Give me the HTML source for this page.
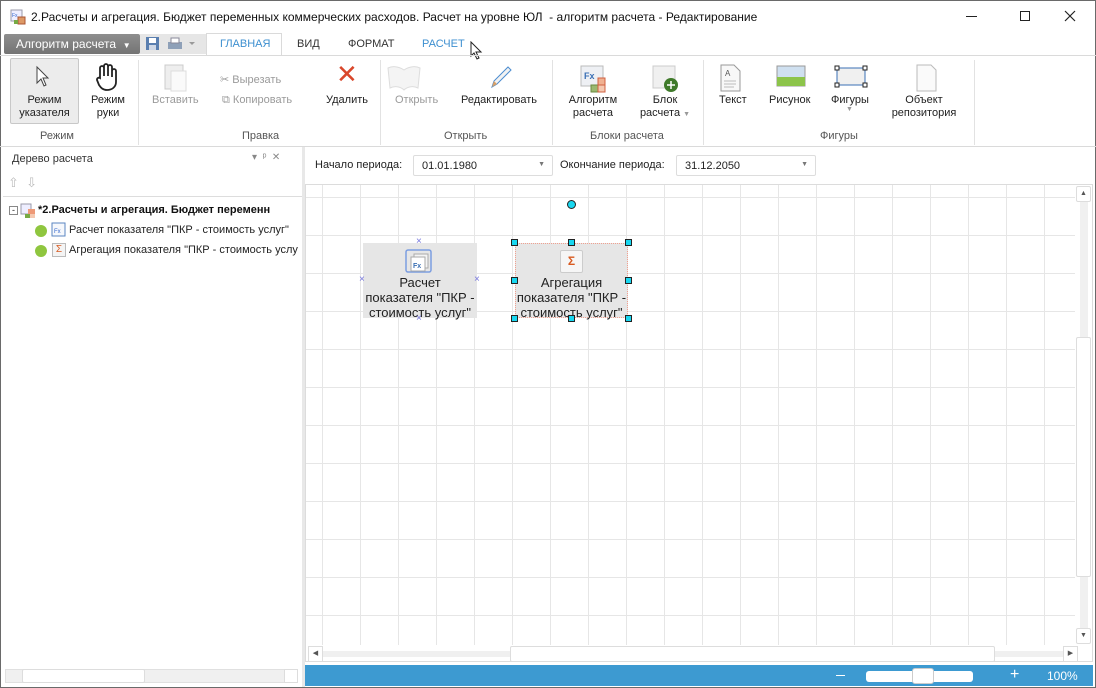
<!DOCTYPE html>
<html><head><meta charset="utf-8"><style>
*{margin:0;padding:0;box-sizing:border-box}
body{width:1096px;height:688px;overflow:hidden;background:#fff;font-family:"Liberation Sans","DejaVu Sans",sans-serif;font-size:11px;color:#222;position:relative}
.a{position:absolute;white-space:nowrap}
.g{color:#9a9a9a}
.c{text-align:center;line-height:13px}
.sep{position:absolute;width:1px;background:#e2e2e2}
.hd{position:absolute;width:7px;height:7px;background:#19d7f0;border:1px solid #222}
.x{position:absolute;color:#7777dd;font-size:10px}
</style></head><body>
<div class="a" style="left:0;top:0;width:1096px;height:688px;border:1px solid #6a6a6a"></div>
<!-- title -->
<svg class="a" style="left:10px;top:9px" width="16" height="16"><rect x="1" y="1" width="11" height="11" fill="#eef" stroke="#99a"/><text x="2" y="8" font-size="5" fill="#36c">Fx</text><rect x="8" y="8" width="7" height="7" fill="#d96" stroke="#a53"/><rect x="4" y="11" width="4" height="4" fill="#7a4"/></svg>
<div class="a" style="left:31px;top:10px;font-size:12px;color:#111">2.Расчеты и агрегация. Бюджет переменных коммерческих расходов. Расчет на уровне ЮЛ&nbsp; - алгоритм расчета - Редактирование</div>
<div class="a" style="left:966px;top:16px;width:11px;height:1px;background:#222"></div>
<div class="a" style="left:1020px;top:11px;width:10px;height:10px;border:1px solid #222"></div>
<svg class="a" style="left:1064px;top:10px" width="12" height="12"><path d="M1 1L11 11M11 1L1 11" stroke="#222" stroke-width="1.2"/></svg>
<!-- tabs row -->
<div class="a" style="left:4px;top:34px;width:136px;height:20px;background:linear-gradient(#8e8e8e,#747474);border-radius:2px;color:#fff;font-size:12px;padding:3px 0 0 12px">Алгоритм расчета &nbsp;<span style="font-size:8px">▼</span></div>
<div class="a" style="left:140px;top:34px;width:66px;height:20px;background:#e6e6e6"></div>
<svg class="a" style="left:145px;top:36px" width="60" height="16"><rect x="1" y="1" width="13" height="13" fill="#5a7fb0"/><rect x="4" y="2" width="7" height="5" fill="#fff"/><rect x="4" y="9" width="7" height="5" fill="#cfd8e6"/><rect x="23" y="6" width="14" height="7" fill="#8ea0b8"/><rect x="26" y="2" width="8" height="5" fill="#fff" stroke="#889"/><path d="M44 6 l6 0 l-3 3z" fill="#999"/></svg>
<div class="a" style="left:206px;top:33px;width:76px;height:23px;border:1px solid #dadada;border-bottom:none;background:#fff"></div>
<div class="a" style="left:220px;top:38px;color:#3d8fd0;font-size:11px">ГЛАВНАЯ</div>
<div class="a" style="left:297px;top:38px;color:#333">ВИД</div>
<div class="a" style="left:348px;top:38px;color:#333">ФОРМАТ</div>
<div class="a" style="left:422px;top:38px;color:#3d8fd0">РАСЧЕТ</div>
<svg class="a" style="left:470px;top:41px" width="14" height="20"><path d="M1 1 L1 15 L4 12 L7 18 L9 17 L6 11 L11 11Z" fill="#fff" stroke="#222"/></svg>
<div class="a" style="left:0;top:55px;width:1096px;height:1px;background:#dadada"></div>
<!-- ribbon -->
<div class="a" style="left:10px;top:58px;width:69px;height:66px;background:#ececec;border:1px solid #c8c8c8;border-radius:2px"></div>
<svg class="a" style="left:35px;top:65px" width="16" height="24"><path d="M2 2 L2 18 L6 14 L9 21 L11 20 L8 13 L13 13Z" fill="#fff" stroke="#444"/></svg>
<svg class="a" style="left:94px;top:62px" width="28" height="30"><path d="M6 16 V6 a2 2 0 0 1 4 0 V14 V4 a2 2 0 0 1 4 0 V14 V5 a2 2 0 0 1 4 0 V15 V9 a2 2 0 0 1 4 0 V20 c0 5-4 8-9 8 c-4 0-6-2-8-5 L3 18 a2 2 0 0 1 3-2z" fill="#fff" stroke="#222" stroke-width="1.8"/></svg>
<div class="a c" style="left:11px;top:94px;width:67px">Режим<br>указателя</div>
<div class="a c" style="left:82px;top:94px;width:52px">Режим<br>руки</div>
<div class="a c g" style="left:40px;top:130px;width:67px;color:#555;text-align:left">Режим</div>
<div class="sep" style="left:138px;top:60px;height:85px"></div>
<svg class="a" style="left:162px;top:61px" width="28" height="32"><rect x="3" y="4" width="18" height="24" fill="#eee" stroke="#ccc"/><rect x="9" y="10" width="15" height="20" fill="#fafafa" stroke="#ddd"/></svg>
<div class="a g" style="left:152px;top:94px">Вставить</div>
<div class="a g" style="left:220px;top:73px">✂ Вырезать</div>
<div class="a g" style="left:222px;top:94px">⧉ Копировать</div>
<div class="a" style="left:336px;top:59px;font-size:26px;color:#d9472b">✕</div>
<div class="a" style="left:326px;top:94px">Удалить</div>
<div class="a g" style="left:242px;top:130px;color:#555">Правка</div>
<div class="sep" style="left:380px;top:60px;height:85px"></div>
<svg class="a" style="left:384px;top:64px" width="40" height="28"><path d="M20 6 C14 2 8 2 4 4 L6 24 C10 22 16 22 20 26 C24 22 30 22 34 24 L36 4 C32 2 26 2 20 6Z" fill="#f4f4f4" stroke="#ddd"/></svg>
<div class="a g" style="left:395px;top:94px">Открыть</div>
<svg class="a" style="left:488px;top:63px" width="26" height="28"><path d="M4 24 L6 18 L20 4 L23 7 L9 21Z" fill="#f2f2f2" stroke="#4a8cd0"/><path d="M4 24 L6 18 L9 21Z" fill="#d9a066"/></svg>
<div class="a" style="left:461px;top:94px">Редактировать</div>
<div class="a" style="left:444px;top:130px;color:#555">Открыть</div>
<div class="sep" style="left:552px;top:60px;height:85px"></div>
<svg class="a" style="left:578px;top:64px" width="30" height="30"><rect x="3" y="2" width="22" height="20" fill="#eef0f4" stroke="#bbb"/><text x="6" y="15" font-size="9" font-weight="bold" fill="#3a6fb4" font-family="Liberation Sans">Fx</text><rect x="20" y="14" width="7" height="7" fill="#f0b090" stroke="#d06040"/><rect x="13" y="21" width="7" height="7" fill="#9ab870" stroke="#6a8a40"/><rect x="20" y="21" width="7" height="7" fill="#f4c8b0" stroke="#d06040"/></svg>
<div class="a c" style="left:562px;top:94px;width:62px">Алгоритм<br>расчета</div>
<svg class="a" style="left:650px;top:64px" width="30" height="30"><rect x="3" y="2" width="22" height="22" fill="#f0f0f0" stroke="#ccc"/><circle cx="21" cy="21" r="7" fill="#3f7a2a"/><path d="M21 17v8M17 21h8" stroke="#fff" stroke-width="1.5"/></svg>
<div class="a c" style="left:634px;top:94px;width:62px">Блок<br>расчета <span style="font-size:7px;color:#999">▼</span></div>
<div class="a" style="left:590px;top:130px;color:#555">Блоки расчета</div>
<div class="sep" style="left:703px;top:60px;height:85px"></div>
<svg class="a" style="left:718px;top:63px" width="26" height="30"><path d="M3 2 H16 L22 8 V28 H3Z" fill="#f8f8f8" stroke="#999"/><text x="7" y="13" font-size="8" fill="#555">A</text><path d="M6 18h12M6 21h12M6 24h10" stroke="#bbb"/></svg>
<div class="a" style="left:719px;top:94px">Текст</div>
<svg class="a" style="left:776px;top:65px" width="30" height="24"><rect x="1" y="1" width="28" height="20" fill="#cfe0f0" stroke="#999"/><rect x="1" y="12" width="28" height="9" fill="#8cc44a"/></svg>
<div class="a" style="left:769px;top:94px">Рисунок</div>
<svg class="a" style="left:834px;top:65px" width="34" height="24"><rect x="3" y="3" width="28" height="17" fill="#f0f0f0" stroke="#3a6fb4"/><rect x="1" y="1" width="4" height="4" fill="#fff" stroke="#222"/><rect x="29" y="1" width="4" height="4" fill="#fff" stroke="#222"/><rect x="1" y="18" width="4" height="4" fill="#fff" stroke="#222"/><rect x="29" y="18" width="4" height="4" fill="#fff" stroke="#222"/></svg>
<div class="a" style="left:831px;top:94px">Фигуры</div>
<div class="a" style="left:846px;top:106px;font-size:7px;color:#999">▼</div>
<svg class="a" style="left:914px;top:63px" width="26" height="30"><path d="M3 2 H17 L22 7 V28 H3Z" fill="#fafafa" stroke="#bbb"/></svg>
<div class="a c" style="left:884px;top:94px;width:80px">Объект<br>репозитория</div>
<div class="a" style="left:820px;top:130px;color:#555">Фигуры</div>
<div class="sep" style="left:974px;top:60px;height:85px"></div>
<div class="a" style="left:0;top:146px;width:1096px;height:1px;background:#dadada"></div>
<!-- left panel -->
<div class="a" style="left:12px;top:153px;color:#333">Дерево расчета</div>
<div class="a" style="left:252px;top:152px;color:#888;font-size:10px">▾ &nbsp;ᵖ &nbsp;✕</div>
<div class="a" style="left:8px;top:175px;color:#bbb;font-size:13px">⇧ &nbsp;⇩</div>
<div class="a" style="left:3px;top:196px;width:299px;height:1px;background:#ddd"></div>
<div class="a" style="left:302px;top:147px;width:3px;height:540px;background:#e8e8e8"></div>
<div class="a" style="left:9px;top:206px;width:9px;height:9px;border:1px solid #888;font-size:9px;line-height:6px;text-align:center">-</div>
<svg class="a" style="left:20px;top:203px" width="16" height="16"><rect x="1" y="1" width="10" height="10" fill="#eef" stroke="#99a"/><rect x="8" y="6" width="7" height="5" fill="#e97" /><rect x="5" y="11" width="5" height="4" fill="#7a4"/><rect x="10" y="11" width="5" height="4" fill="#f4c8b0"/></svg>
<div class="a" style="left:38px;top:204px;font-weight:bold;color:#111">*2.Расчеты и агрегация. Бюджет переменн</div>
<div class="a" style="left:35px;top:225px;width:12px;height:12px;border-radius:6px;background:#8fc63f"></div>
<svg class="a" style="left:51px;top:222px" width="16" height="16"><rect x="1" y="1" width="13" height="13" fill="#f6f8fc" stroke="#5b86c2"/><text x="3" y="11" font-size="6" fill="#36c">Fx</text></svg>
<div class="a" style="left:69px;top:224px;font-size:11px">Расчет показателя "ПКР - стоимость услуг"</div>
<div class="a" style="left:35px;top:245px;width:12px;height:12px;border-radius:6px;background:#8fc63f"></div>
<div class="a" style="left:52px;top:243px;width:14px;height:14px;border:1px solid #bbb;background:#f4f4f4;color:#d85a20;font-size:10px;text-align:center;line-height:12px">Σ</div>
<div class="a" style="left:69px;top:244px">Агрегация показателя "ПКР - стоимость услу</div>
<div class="a" style="left:5px;top:669px;width:293px;height:14px;background:#f0f0f0;border:1px solid #e0e0e0"></div>
<div class="a" style="left:22px;top:669px;width:123px;height:14px;background:#fff;border:1px solid #ddd;border-radius:2px"></div>
<div class="a" style="left:284px;top:669px;width:14px;height:14px;background:#fff;border:1px solid #ddd"></div>
<!-- period -->
<div class="a" style="left:315px;top:159px">Начало периода:</div>
<div class="a" style="left:413px;top:155px;width:140px;height:21px;border:1px solid #ddd;border-radius:2px;padding:4px 0 0 8px">01.01.1980<span style="position:absolute;right:7px;top:5px;font-size:7px;color:#777">▼</span></div>
<div class="a" style="left:560px;top:159px">Окончание периода:</div>
<div class="a" style="left:676px;top:155px;width:140px;height:21px;border:1px solid #ddd;border-radius:2px;padding:4px 0 0 8px">31.12.2050<span style="position:absolute;right:7px;top:5px;font-size:7px;color:#777">▼</span></div>
<!-- canvas -->
<div class="a" style="left:305px;top:184px;width:788px;height:478px;border:1px solid #dcdcdc"></div>
<div class="a" style="left:306px;top:185px;width:769px;height:460px;background-image:linear-gradient(90deg,#e6e6e6 1px,transparent 1px),linear-gradient(#e6e6e6 1px,transparent 1px);background-size:38px 38px;background-position:16px 12px"></div>
<div class="a" style="left:1080px;top:200px;width:8px;height:440px;background:#f0f0f0"></div>
<div class="a" style="left:1076px;top:186px;width:15px;height:16px;background:#fff;border:1px solid #ddd;border-radius:2px;font-size:7px;text-align:center;line-height:14px;color:#555">▲</div>
<div class="a" style="left:1076px;top:337px;width:15px;height:240px;background:#fff;border:1px solid #ddd;border-radius:2px"></div>
<div class="a" style="left:1076px;top:628px;width:15px;height:16px;background:#fff;border:1px solid #ddd;border-radius:2px;font-size:7px;text-align:center;line-height:14px;color:#555">▼</div>
<div class="a" style="left:308px;top:651px;width:770px;height:6px;background:#f0f0f0"></div>
<div class="a" style="left:308px;top:646px;width:15px;height:16px;background:#fff;border:1px solid #ddd;font-size:7px;line-height:14px;text-align:center;color:#555">◀</div>
<div class="a" style="left:510px;top:646px;width:485px;height:16px;background:#fff;border:1px solid #ddd;border-radius:2px"></div>
<div class="a" style="left:1063px;top:646px;width:15px;height:16px;background:#fff;border:1px solid #ddd;font-size:7px;line-height:14px;text-align:center;color:#555">▶</div>
<!-- status -->
<div class="a" style="left:305px;top:665px;width:788px;height:21px;background:#3d9ad1"></div>
<div class="a" style="left:836px;top:675px;width:9px;height:1px;background:#fff"></div>
<div class="a" style="left:866px;top:671px;width:107px;height:11px;background:#fff;border-radius:3px"></div>
<div class="a" style="left:912px;top:668px;width:22px;height:16px;background:#fff;border:1px solid #ccc;border-radius:3px"></div>
<div class="a" style="left:1010px;top:666px;color:#fff;font-size:16px">+</div>
<div class="a" style="left:1047px;top:669px;color:#fff;font-size:12px">100%</div>
<!-- node 1 -->
<div class="a" style="left:363px;top:243px;width:114px;height:75px;background:#e6e6e6"></div>
<svg class="a" style="left:403px;top:247px" width="32" height="30"><rect x="3" y="3" width="25" height="22" rx="2" fill="none" stroke="#7b9de0" stroke-width="1.5"/><rect x="11" y="7" width="14" height="14" fill="#f4f4f4" stroke="#aaa"/><rect x="8" y="10" width="14" height="14" fill="#fff" stroke="#aaa"/><text x="10" y="21" font-size="7" font-weight="bold" fill="#3a6fb4">Fx</text></svg>
<div class="a c" style="left:358px;top:275px;width:124px;font-size:13px;line-height:15px;color:#222">Расчет<br>показателя "ПКР -<br>стоимость услуг"</div>
<div class="x" style="left:416px;top:236px">×</div>
<div class="x" style="left:359px;top:274px">×</div>
<div class="x" style="left:474px;top:274px">×</div>
<div class="x" style="left:416px;top:313px">×</div>
<!-- node 2 -->
<div class="a" style="left:515px;top:243px;width:113px;height:75px;background:#e6e6e6;border:1px dotted #f0a090"></div>
<div class="a" style="left:560px;top:250px;width:23px;height:23px;border:1px solid #ccc;border-radius:2px;background:#f6f6f6;color:#d85a20;font-weight:bold;font-size:12px;text-align:center;line-height:21px">Σ</div>
<div class="a c" style="left:509px;top:275px;width:125px;font-size:13px;line-height:15px;color:#222">Агрегация<br>показателя "ПКР -<br>стоимость услуг"</div>
<div class="hd" style="left:511px;top:239px"></div><div class="hd" style="left:568px;top:239px"></div><div class="hd" style="left:625px;top:239px"></div>
<div class="hd" style="left:511px;top:277px"></div><div class="hd" style="left:625px;top:277px"></div>
<div class="hd" style="left:511px;top:315px"></div><div class="hd" style="left:568px;top:315px"></div><div class="hd" style="left:625px;top:315px"></div>
<div class="a" style="left:567px;top:200px;width:9px;height:9px;border-radius:5px;background:#19d7f0;border:1px solid #222"></div>
</body></html>
